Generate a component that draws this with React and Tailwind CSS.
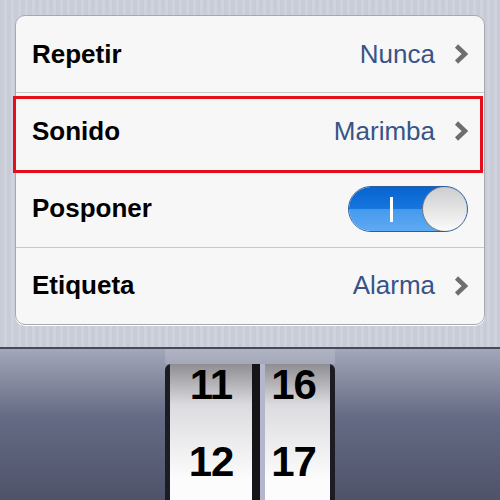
import React from 'react';

const Chevron = () => (
  <svg width="14" height="22" viewBox="0 0 14 22" className="shrink-0">
    <path d="M2.5 3 L11 11 L2.5 19" fill="none" stroke="#6e6e6e" strokeWidth="4.5" strokeLinejoin="miter" />
  </svg>
);

const Row = ({ label, value, children, last }) => (
  <div className={`flex-1 flex items-center justify-between px-4 ${last ? '' : 'border-b border-[#c9c9cc]'}`}>
    <span className="text-[26px] font-bold text-black">{label}</span>
    {children || (
      <div className="flex items-center gap-[19px]">
        <span className="text-[26px] text-[#385487]">{value}</span>
        <Chevron />
      </div>
    )}
  </div>
);

const Toggle = () => (
  <div className="relative w-[120px] h-[46px] rounded-full overflow-hidden border border-[#2c5d9e]">
    <div className="h-1/2 bg-linear-to-b from-[#0863cf] to-[#1677de]" />
    <div className="h-1/2 bg-linear-to-b from-[#4599ec] to-[#5eaaf3]" />
    {/* on-state mark */}
    <div className="absolute left-[41px] top-[10px] w-[3px] h-[25px] bg-white" />
    <div className="absolute right-[-1px] top-[-1px] w-[46px] h-[46px] rounded-full border border-[#77777a] bg-linear-to-b from-[#cdcdcf] to-[#fbfbfb]" />
  </div>
);

const PickerColumn = ({ values, width, shift }) => (
  <div className={`${width} h-full flex flex-col bg-linear-to-b from-[#8e8e93] from-0% via-[#dcdce0] via-30% to-[#fcfcfc] to-85%`}>
    <div className="-mt-[18px]">
      {values.map((v) => (
        <div key={v} className={`h-[77px] flex items-center justify-center text-[42px] font-bold text-black tracking-[-1px] ${shift}`}>
          {v}
        </div>
      ))}
    </div>
  </div>
);

export default function App() {
  return (
    <div className="relative w-[500px] h-[500px] overflow-hidden flex flex-col" style={{ fontFamily: '"Liberation Sans", Arial, sans-serif' }}>
      {/* settings list on pinstripe */}
      <div className="h-[350px] p-[15px] bg-[repeating-linear-gradient(90deg,#c7ccd7_0px,#c7ccd7_4px,#cfd3dd_4px,#cfd3dd_7px)]">
        <div className="h-[310px] flex flex-col rounded-[10px] bg-[#f7f7f7] border border-[#a6a9b1] shadow-[0_1px_0_#ffffff]">
          <Row label="Repetir" value="Nunca" />
          <Row label="Sonido" value="Marimba" />
          <Row label="Posponer">
            <Toggle />
          </Row>
          <Row label="Etiqueta" value="Alarma" last />
        </div>
      </div>
      <div className="h-[2px] bg-[#464a58]" />

      {/* time picker */}
      <div className="flex-1 flex justify-center bg-linear-to-b from-[#a3a7b9] via-[#666b85] via-45% to-[#4e536a]">
        <div className="w-[170px] flex flex-col">
          <div className="h-[15px] bg-white/15" />
          <div className="flex-1 flex rounded-t-[6px] overflow-hidden bg-[#1c1d24] px-[5px]">
            <PickerColumn values={['11', '12']} width="w-[82px]" shift="" />
            <div className="w-[8px] bg-[#141419]" />
            <div className="w-[5px] bg-[#b4b6cc]" />
            <PickerColumn values={['16', '17']} width="w-[65px]" shift="-translate-x-[4px]" />
          </div>
        </div>
      </div>

      {/* highlight around the Sonido row */}
      <div className="absolute left-[13px] top-[96px] w-[470px] h-[77px] border-[3px] border-[#e3101c]" />
    </div>
  );
}
